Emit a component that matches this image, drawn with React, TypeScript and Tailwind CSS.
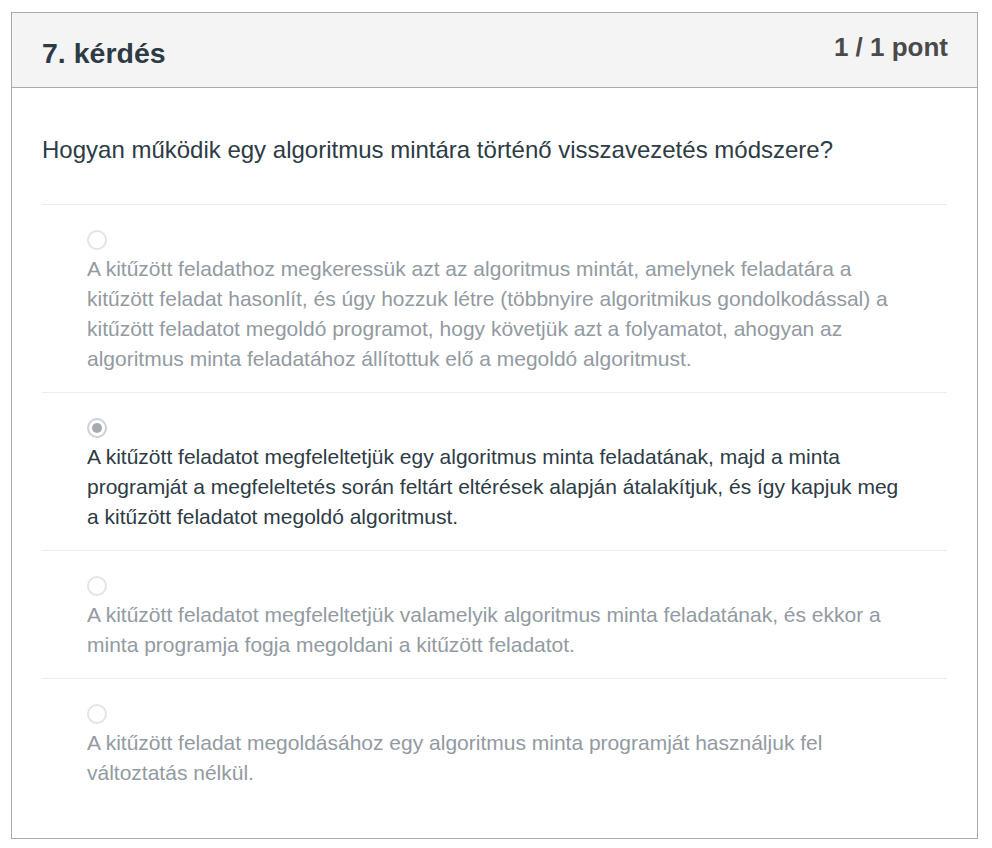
const answers = [
  {
    text: 'A kitűzött feladathoz megkeressük azt az algoritmus mintát, amelynek feladatára a kitűzött feladat hasonlít, és úgy hozzuk létre (többnyire algoritmikus gondolkodással) a kitűzött feladatot megoldó programot, hogy követjük azt a folyamatot, ahogyan az algoritmus minta feladatához állítottuk elő a megoldó algoritmust.',
    selected: false,
  },
  {
    text: 'A kitűzött feladatot megfeleltetjük egy algoritmus minta feladatának, majd a minta programját a megfeleltetés során feltárt eltérések alapján átalakítjuk, és így kapjuk meg a kitűzött feladatot megoldó algoritmust.',
    selected: true,
  },
  {
    text: 'A kitűzött feladatot megfeleltetjük valamelyik algoritmus minta feladatának, és ekkor a minta programja fogja megoldani a kitűzött feladatot.',
    selected: false,
  },
  {
    text: 'A kitűzött feladat megoldásához egy algoritmus minta programját használjuk fel változtatás nélkül.',
    selected: false,
  },
]

function Radio({ checked }: { checked: boolean }) {
  return (
    <span
      className={`flex h-5 w-5 items-center justify-center rounded-full border-2 ${
        checked ? 'border-[#cdd0d5]' : 'border-[#e3e4e6]'
      }`}
    >
      {checked && <span className="h-2.5 w-2.5 rounded-full bg-[#a8aab2]" />}
    </span>
  )
}

export default function App() {
  return (
    <div className="min-h-screen bg-white pt-3 pl-[11px] [font-family:'Liberation_Sans',Arial,sans-serif]">
      <div className="w-[967px] h-[827px] border border-[#aaaaaa]">
        {/* Header */}
        <div className="flex h-[75px] items-start justify-between border-b border-[#aaaaaa] bg-[#f4f4f4] pl-[30px] pr-[29px]">
          <h2 className="mt-[22px] text-[28.5px] font-bold leading-[36px] text-[#2d3b45]">7. kérdés</h2>
          <span className="mt-[18px] text-[26px] font-bold leading-[32px] text-[#4a4a4a]">1 / 1 pont</span>
        </div>

        {/* Body */}
        <div className="px-[30px]">
          <p className="pt-[47px] pb-[39px] text-[24px] leading-[30px] text-[#2d3b45]">
            Hogyan működik egy algoritmus mintára történő visszavezetés módszere?
          </p>

          {answers.map((a, i) => (
            <div
              key={i}
              className={`border-t border-[#ececec] pl-[45px] pr-[40px] pt-[25px] ${i === answers.length - 1 ? 'pb-4' : 'pb-[18px]'}`}
            >
              <Radio checked={a.selected} />
              <p
                className={`mt-[4px] text-[21px] leading-[30px] ${
                  a.selected ? 'text-[#2d3b45]' : 'text-[#929aa2]'
                }`}
              >
                {a.text}
              </p>
            </div>
          ))}
        </div>
      </div>
    </div>
  )
}
